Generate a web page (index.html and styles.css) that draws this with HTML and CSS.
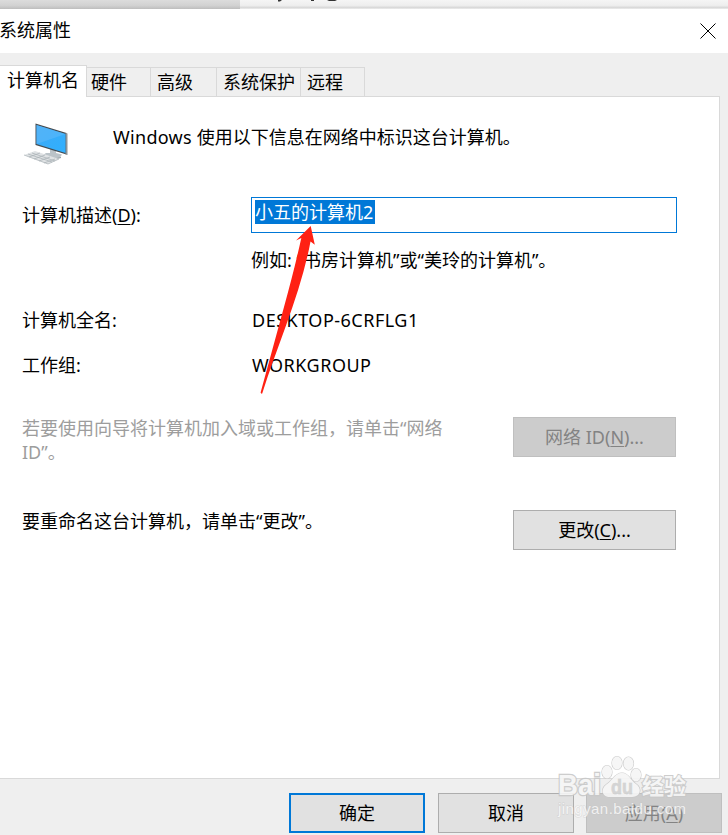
FILE: index.html
```html
<!DOCTYPE html>
<html lang="zh-CN">
<head>
<meta charset="utf-8">
<title>系统属性</title>
<link rel="stylesheet" href="styles.css">
</head>
<body>
<div class="window">
  <div class="backdrop"><div class="backdrop-left"></div>
    <svg class="backdrop-marks" width="80" height="3"><path d="M0 0h4l-2 1.500h-2zM33 0h3v1h-3zM49 0h10l-2 1h-6z" fill="#333"/></svg>
  </div>
  <header class="titlebar">
    <h1>系统属性</h1>
    <svg class="close" width="16" height="16" viewBox="0 0 16 16"><path d="M.5.5l15 15M15.5.5l-15 15" stroke="#000" stroke-width="1"/></svg>
  </header>
  <nav class="tabs">
    <div class="tab active">计算机名</div>
    <div class="tab hardware">硬件</div>
    <div class="tab advanced">高级</div>
    <div class="tab protection">系统保护</div>
    <div class="tab remote">远程</div>
    <div class="tab-line"></div>
  </nav>
  <main class="panel">
    <div class="intro">
      <svg class="computer" width="46" height="44" viewBox="0 0 46 44">
        <defs><linearGradient id="screen" x1="0" y1="0" x2="1" y2="1"><stop offset="0" stop-color="#3fa9f5"/><stop offset="1" stop-color="#2fb0ff"/></linearGradient></defs>
        <path d="M26 25l6 2v3l6 1.500-2 3-5 1.500-12-4 3-2h4z" fill="#bbc3c8"/>
        <path d="M19 32l12 4 6-1.500" fill="none" stroke="#8e989e"/>
        <path d="M11.500 .5l31 9.500v21.500l-31-9.500z" fill="#454b50"/>
        <path d="M41.500 10l2 .5v21.500l-2-.5z" fill="#8d9498"/>
        <path d="M12.500 2l29 9v19l-29-9z" fill="url(#screen)"/>
        <path d="M12.500 2l29 9-29 10z" fill="#60b9fa" opacity=".55"/>
        <path d="M0 32l11-4 24 8-11 5z" fill="#dfe2e4"/>
        <path d="M0 32l24 9 11-5M4 31l24 8M8 30l23 8M5 34l11-4M10 36l11-4M15 38l11-4M20 40l11-4" fill="none" stroke="#a8b0b5" stroke-width=".7"/>
      </svg>
      <p><span class="product">Windows</span> 使用以下信息在网络中标识这台计算机。</p>
    </div>
    <div class="row description">
      <label for="description">计算机描述(<u>D</u>):</label>
      <div class="input" id="description"><span class="selection">小五的计算机2</span></div>
    </div>
    <p class="example">例如: “书房计算机”或“美玲的计算机”。</p>
    <div class="row fullname"><span>计算机全名:</span><span class="value">DESKTOP-6CRFLG1</span></div>
    <div class="row workgroup"><span>工作组:</span><span class="value">WORKGROUP</span></div>
    <div class="action network">
      <p>若要使用向导将计算机加入域或工作组，请单击“网络<br>ID”。</p>
      <button class="disabled" disabled>网络 ID(<u>N</u>)...</button>
    </div>
    <div class="action rename">
      <p>要重命名这台计算机，请单击“更改”。</p>
      <button>更改(<u>C</u>)...</button>
    </div>
  </main>
  <footer class="footer">
    <button class="default">确定</button>
    <button>取消</button>
    <button class="disabled" disabled>应用(<u>A</u>)</button>
  </footer>
  <svg class="arrow" width="56" height="170" viewBox="260 225 56 170"><path d="M310.700 226L296 240.500L301.300 238Q295 267 284 307L260.600 392.500Q261 394 262.200 393.500C277 346 301 293 310.500 241.500L314.800 244.800Z" fill="#ff2113"/></svg>
  <svg class="watermark" width="140" height="66" viewBox="0 0 140 66">
    <g class="mark">
      <text class="brand" x="5" y="42" textLength="43" lengthAdjust="spacingAndGlyphs">Bai</text>
      <ellipse cx="54" cy="19" rx="5" ry="6.500"/><ellipse cx="64" cy="10" rx="5" ry="6.500"/><ellipse cx="75.500" cy="10.500" rx="5" ry="6.500"/><ellipse cx="83" cy="22" rx="5" ry="6.500"/>
      <path d="M69 20C62 20 60 27 54 31C47 36 49 44 57 44H79C88 44 89 35 83 31C77 27 76 20 69 20Z"/>
      <text class="du" x="58" y="41" textLength="22" lengthAdjust="spacingAndGlyphs">du</text>
      <text class="experience" x="89" y="41" textLength="44" lengthAdjust="spacingAndGlyphs">经验</text>
    </g>
    <text class="address" x="5" y="61" textLength="128">jingyan.baidu.com</text>
  </svg>
</div>
</body>
</html>
```
FILE: styles.css
```css
* { box-sizing: border-box; }
body, h1, p { margin: 0; }
body { background: #efefef; font: 400 18px/24px "Noto Sans", "Noto Sans CJK SC", sans-serif; color: #000; }
h1 { font: inherit; }
u { text-underline-offset: 2px; text-decoration-thickness: 1px; }
.window { position: relative; width: 728px; height: 835px; overflow: hidden; }
.backdrop { height: 9px; display: flex; background: linear-gradient(#f5f5f5, #eee 60%, #d8d8d8 85%, #eee); }
.backdrop-left { width: 240px; background: linear-gradient(#dcdcdc, #d2d2d2 60%, #bdbdbd); }
.backdrop-marks { margin-left: 38px; }
.titlebar { height: 44px; padding: 0 11px 0 0; background: #fff; display: flex; align-items: center; justify-content: space-between; }
.titlebar h1 { margin: -2px 0 0 -1px; }
.close { margin: -1px 1px 0 0; }
.tabs { height: 44px; padding-top: 12px; display: flex; align-items: flex-end; white-space: nowrap; }
.tab { height: 30px; padding: 2px 0 0 6px; border: 1px solid #d9d9d9; border-width: 1px 1px 1px 0; }
.active { width: 87px; height: 32px; padding: 2px 0 0 7px; background: #fff; border-bottom: 0; }
.hardware { width: 64px; padding-left: 4px; }
.advanced { width: 66px; }
.protection { width: 84px; }
.remote { width: 64px; }
.tab-line { width: 355px; height: 1px; background: #d9d9d9; }
.panel { height: 682px; width: 720px; padding-left: 22px; background: #fff; border: 1px solid #d9d9d9; border-width: 0 1px 1px 0; }
.intro { height: 100px; display: flex; padding: 26px 0 0 2px; }
.intro p { margin-left: 43px; padding-top: 2px; }
.product { letter-spacing: .3px; }
.computer { flex: none; }
.row { display: flex; }
.row > :first-child { width: 230px; flex: none; }
.value { letter-spacing: .5px; }
.description { height: 36px; align-items: center; }
.description > :first-child { margin-right: -1px; }
.input { width: 426px; height: 36px; border: 1px solid #0078d7; padding: 2px 3px; }
.selection { display: block; width: 120px; height: 24px; line-height: 24px; background: #0078d7; color: #fff; white-space: nowrap; }
.example { margin: 15px 0 0 229px; }
.fullname { margin-top: 36px; }
.workgroup { margin-top: 21px; }
.action { height: 40px; display: flex; justify-content: space-between; padding-right: 43px; }
.network { margin-top: 40px; color: #9d9d9d; }
.network p { margin-top: -1px; }
.rename { margin-top: 53px; }
.rename p { margin-top: -1px; }
.action button { width: 163px; height: 40px; }
button { background: #e1e1e1; border: 1px solid #adadad; font: inherit; color: #000; padding: 0; }
button.disabled { color: #838383; background: #ccc; border-color: #bfbfbf; }
.footer { display: flex; padding: 14px 6px 0 289px; gap: 12px; }
.footer button { width: 136px; height: 40px; }
.footer button.default { border: 2px solid #0078d7; margin-right: 1px; }
.arrow { position: absolute; left: 260px; top: 225px; }
.watermark { position: absolute; left: 553px; top: 753px; }
.mark { fill: #f6f6f6; stroke: #c8c8c8; stroke-width: 1.2px; paint-order: stroke; opacity: .9; }
.brand { font: 700 30px "Liberation Sans", sans-serif; stroke-width: 2.5px; }
.du { font: 700 20px "Liberation Sans", sans-serif; stroke: #c8c8c8; fill: #d2d2d2; stroke-width: .5px; }
.experience { font: 700 22px "Noto Sans CJK SC", sans-serif; stroke-width: 2px; }
.address { font: 15px "Liberation Sans", sans-serif; fill: #fff; fill-opacity: .75; stroke: #c4c4c4; stroke-width: 1px; stroke-opacity: .5; paint-order: stroke; }
```
